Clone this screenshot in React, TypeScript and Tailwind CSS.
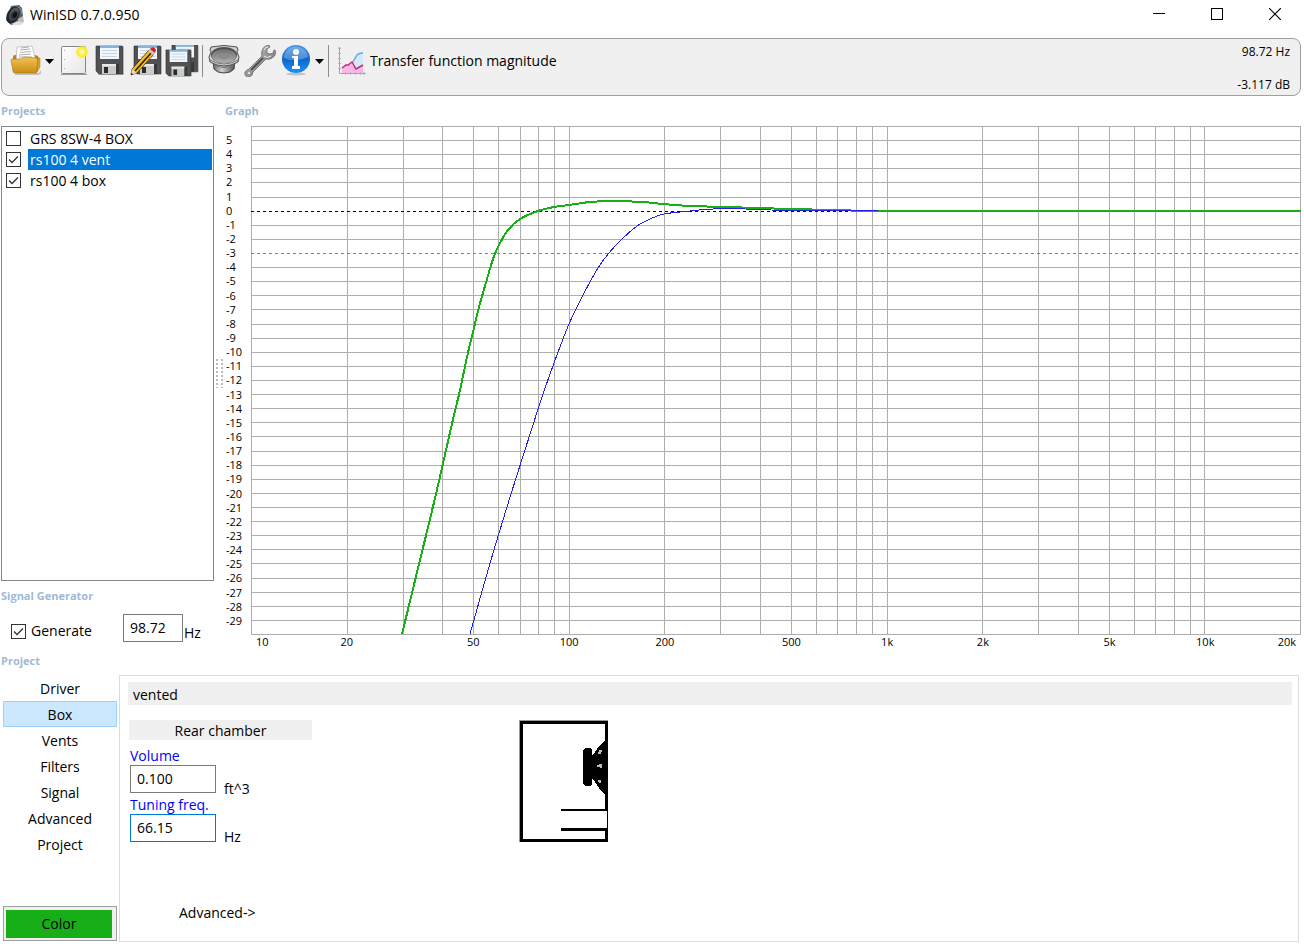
import { useState } from "react";

const FREQ_LINES = [
  20, 30, 40, 50, 60, 70, 80, 90, 100, 200, 300, 400, 500, 600, 700, 800, 900,
  1000, 2000, 3000, 4000, 5000, 6000, 7000, 8000, 9000, 10000,
];

const FREQ_LABELS = [
  { freq: 20, label: "20" },
  { freq: 50, label: "50" },
  { freq: 100, label: "100" },
  { freq: 200, label: "200" },
  { freq: 500, label: "500" },
  { freq: 1000, label: "1k" },
  { freq: 2000, label: "2k" },
  { freq: 5000, label: "5k" },
  { freq: 10000, label: "10k" },
];

const DB_LABELS = Array.from({ length: 35 }, (_, i) => 5 - i);

const PLOT_W = 1050;
const PLOT_H = 508;

const freqRatio = (freq: number) => Math.log10(freq / 10) / Math.log10(2000);
const freqX = (freq: number) => Math.round(freqRatio(freq) * (PLOT_W - 1));
const dbY = (db: number) => Math.round(((6 - db) / 36) * PLOT_H);

type Point = [number, number];

const VENTED: Point[] = [
  [151, 508], [169, 434], [185, 368], [200, 302], [209, 264], [216, 231],
  [222, 206], [228, 181], [236, 153], [242, 133], [248, 119], [257, 104],
  [269, 93], [287, 85], [303, 81], [318, 79], [339, 76], [361, 75],
  [392, 76], [412, 78], [439, 80], [477, 81], [504, 82], [542, 83],
  [580, 84], [627, 85], [700, 85], [1050, 85],
];

const CLOSED: Point[] = [
  [219, 508], [240, 434], [260, 368], [281, 302], [291, 271], [303, 237],
  [318, 198], [331, 171], [347, 142], [358, 127], [369, 115], [386, 100],
  [399, 93], [413, 88], [439, 85], [462, 83], [494, 83], [520, 84],
  [544, 84], [627, 84],
];

// Catmull-Rom through the points, written as cubic beziers
const smoothPath = (pts: Point[]) =>
  pts.slice(1).reduce((d, p2, i) => {
    const p0 = pts[Math.max(i - 1, 0)];
    const p1 = pts[i];
    const p3 = pts[Math.min(i + 2, pts.length - 1)];
    const c1 = [p1[0] + (p2[0] - p0[0]) / 6, p1[1] + (p2[1] - p0[1]) / 6];
    const c2 = [p2[0] - (p3[0] - p1[0]) / 6, p2[1] - (p3[1] - p1[1]) / 6];
    return `${d}C${c1} ${c2} ${p2}`;
  }, `M${pts[0]}`);

const NAV = ["Driver", "Box", "Vents", "Filters", "Signal", "Advanced", "Project"];

const AppIcon = () => (
  <svg width="20" height="22" viewBox="0 0 20 22" aria-hidden="true">
    <path d="M6 2l8-1 3 3 1 8-4 9-8 0-5-5z" fill="#596066" />
    <path d="M13 15l5-3 1 6-5 2z" fill="#b9bdc0" />
    <path d="M6 20l7-3 6 2-4 2H8z" fill="#dcdedf" />
    <ellipse cx="8" cy="11" rx="6" ry="9" transform="rotate(28 8 11)" fill="#22272b" />
    <ellipse cx="9" cy="10" rx="4" ry="7" transform="rotate(28 9 10)" fill="#545c63" />
    <ellipse cx="9" cy="11" rx="3" ry="5" transform="rotate(28 9 11)" fill="#30363b" />
    <ellipse cx="10" cy="11" rx="2" ry="3" transform="rotate(28 10 11)" fill="#0f1214" />
    <path d="M13 3l3 2 1 5" fill="none" stroke="#8f979d" />
  </svg>
);

const OpenIcon = () => (
  <svg width="32" height="32" viewBox="0 0 32 32" aria-hidden="true">
    <defs>
      <linearGradient id="folder" x1="0" y1="0" x2="0" y2="1">
        <stop offset="0" stopColor="#f2c157" />
        <stop offset="1" stopColor="#c98e14" />
      </linearGradient>
    </defs>
    <path d="M5 28h24l2-3v4l-3 1H5z" fill="#c2c2c2" />
    <path d="M3 12q0-2 2-2h19q4 0 5 3v10l-3 4H5l-2-5z" fill="#b98011" />
    <path d="M7 2l15-1 4 15H6z" fill="#fff" stroke="#b5b5b5" strokeWidth=".7" />
    <path d="M11 3l8-1M10 5l10-1M10 7.5l11-1M9 10l12-1M9 12h13" stroke="#9a9a9a" strokeWidth=".8" />
    <path d="M1 15q0-1 2-1h8l3-2 12 1q2 0 2 2l-1 12q0 1-2 1H5q-2 0-2-2z" fill="url(#folder)" stroke="#a9740b" strokeWidth=".6" />
    <path d="M28 14l2-1v9l-3 5z" fill="#dca736" stroke="#a9740b" strokeWidth=".5" />
  </svg>
);

const NewIcon = () => (
  <svg width="32" height="32" viewBox="0 0 32 32" aria-hidden="true">
    <defs>
      <linearGradient id="page" x1="0" y1="0" x2="1" y2="1">
        <stop offset="0" stopColor="#fff" />
        <stop offset="1" stopColor="#e6e6e6" />
      </linearGradient>
      <radialGradient id="glow">
        <stop offset="0" stopColor="#fffbd0" />
        <stop offset=".35" stopColor="#fff56a" />
        <stop offset=".65" stopColor="#fbe92d" />
        <stop offset="1" stopColor="#fff042" stopOpacity="0" />
      </radialGradient>
    </defs>
    <path d="M2 29h26v1H2z" fill="#999" />
    <rect x="2.5" y="1.5" width="24" height="27" rx="1" fill="url(#page)" stroke="#858585" />
    <path d="M5.5 5v22" stroke="#aaa" strokeDasharray="1 8" />
    <circle cx="23" cy="7" r="7" fill="url(#glow)" />
  </svg>
);

const Floppy = () => (
  <g>
    <path d="M1 1h26q1 0 1 1v27H4l-3-3z" fill="#4f5152" stroke="#333" strokeWidth=".6" />
    <path d="M5 1h19v13H5z" fill="#f3f7fc" />
    <path d="M5 1h19v2H5z" fill="#86b4dc" />
    <path d="M7 5.5h15M7 8.5h15M7 11.5h15" stroke="#c4d6e8" />
    <path d="M7 19h14v10H7z" fill="#c9cbcc" />
    <path d="M7 19h14v2H7z" fill="#e7e8e8" />
    <path d="M9 22h4v6H9z" fill="#2a2b2c" />
    <path d="M21 19h3v10h-3z" fill="#38393a" />
  </g>
);

const SaveIcon = () => (
  <svg width="32" height="32" viewBox="0 0 32 32" aria-hidden="true">
    <path d="M3 29h26v1H3z" fill="#bbb" />
    <Floppy />
  </svg>
);

const SaveAsIcon = () => (
  <svg width="32" height="32" viewBox="0 0 32 32" aria-hidden="true">
    <g transform="translate(3 0)">
      <Floppy />
    </g>
    <path d="M19 5l5 4L7 28l-6 2 1-6z" fill="#f7b920" stroke="#2b210b" strokeWidth=".7" />
    <path d="M22 7 5 26" stroke="#2b210b" strokeWidth="1.6" />
    <path d="M18 6l2-2 5 4-2 2z" fill="#c4c7c9" />
    <path d="M20 4l1-1q3-2 5 2l-1 3z" fill="#d41f26" />
    <path d="M2 24l5 4-6 2z" fill="#efd9ac" />
    <path d="M1 28l2 1-2 1z" fill="#111" />
  </svg>
);

const SaveAllIcon = () => (
  <svg width="34" height="32" viewBox="0 0 34 32" aria-hidden="true">
    <g transform="translate(6 -1) scale(.96)">
      <Floppy />
    </g>
    <g transform="translate(0 4) scale(.93)">
      <Floppy />
    </g>
  </svg>
);

const DriverIcon = () => (
  <svg width="32" height="32" viewBox="0 0 32 32" aria-hidden="true">
    <defs>
      <linearGradient id="basket" x1="0" y1="0" x2="1" y2="0">
        <stop offset="0" stopColor="#6a6a6a" />
        <stop offset=".4" stopColor="#cfcfcf" />
        <stop offset="1" stopColor="#4d4d4d" />
      </linearGradient>
      <linearGradient id="cone" x1="0" y1="0" x2="0" y2="1">
        <stop offset="0" stopColor="#6d6d6d" />
        <stop offset="1" stopColor="#b0b0b0" />
      </linearGradient>
    </defs>
    <path d="M5 16h22l-1 8q-3 4-10 4T6 24z" fill="url(#basket)" stroke="#444" />
    <path d="M6 20q10 5 20 0" fill="none" stroke="#777" />
    <path d="M3 2l4-.5q9-2 18 0l4 .5 1 3-1 2 2 5-1 5q-14 8-28 0l-1-5 2-5-1-2z" fill="#d0d0d0" stroke="#4f4f4f" />
    <ellipse cx="16" cy="10" rx="13" ry="8" fill="#4c4c4c" />
    <ellipse cx="16" cy="11" rx="12" ry="7" fill="url(#cone)" />
    <ellipse cx="16" cy="11" rx="6" ry="3" fill="#8a8a8a" />
    <path d="M2 15q14 8 28 0" fill="none" stroke="#777" />
  </svg>
);

const WrenchIcon = () => (
  <svg width="32" height="32" viewBox="0 0 32 32" aria-hidden="true">
    <defs>
      <linearGradient id="steel" x1="0" y1="0" x2="1" y2="1">
        <stop offset="0" stopColor="#c9c9c9" />
        <stop offset=".5" stopColor="#999" />
        <stop offset="1" stopColor="#6a6a6a" />
      </linearGradient>
    </defs>
    <path
      d="M18 6q1-5 7-6l1 2-3 2 0 4 3 1 3-1 1-3h1q2 5-3 8-3 2-6 1L9 27q0 4-4 5-5 0-4-5 1-2 4-3L18 11q-1-2 0-5z"
      fill="url(#steel)"
      stroke="#6b6b6b"
      strokeWidth=".8"
    />
    <path d="M19 13 7 25" stroke="#444" strokeWidth="1.6" />
    <path d="M20 5q1-3 4-3M20 11q3 3 7 0" fill="none" stroke="#eee" />
    <circle cx="5" cy="28" r="1.5" fill="#f0f0f0" stroke="#777" strokeWidth=".5" />
  </svg>
);

const InfoIcon = () => (
  <svg width="32" height="32" viewBox="0 0 32 32" aria-hidden="true">
    <defs>
      <linearGradient id="info" x1="0" y1="0" x2="0" y2="1">
        <stop offset="0" stopColor="#4697e4" />
        <stop offset=".5" stopColor="#0d66cb" />
        <stop offset="1" stopColor="#1e93f5" />
      </linearGradient>
    </defs>
    <ellipse cx="16" cy="29" rx="10" ry="1.5" fill="#c2c2c2" />
    <circle cx="16" cy="14" r="14" fill="url(#info)" />
    <path d="M4 13A12 11 0 0 1 28 12Q16 18 4 13z" fill="#fff" opacity=".25" />
    <circle cx="16" cy="7" r="3" fill="#fff" />
    <path d="M12 11h6v10h2v3h-8v-3h2v-8h-2z" fill="#fff" />
  </svg>
);

const ChartIcon = () => (
  <svg width="28" height="30" viewBox="0 0 28 30" aria-hidden="true">
    <path d="M4 25l8-7 4-2 3-6 6-3v19H4z" fill="#d5e9fa" />
    <path d="M4 22l9-5 6 6 6-4v8H4z" fill="#fbb8e6" />
    <path d="M15 16l4-7q2-2 6-2" fill="none" stroke="#62a8e6" strokeWidth="1.5" />
    <path d="M4 22l4-3 2 0 4-3 4 7 7-4" fill="none" stroke="#c2286f" strokeWidth="1.5" />
    <path d="M1.5 1v26.5H27" fill="none" stroke="#a5a5a5" />
    <path
      d="M0 3l1.5-2L3 3M0 7.5h3M0 12.5h3M0 17.5h3M0 22.5h3M7.5 26v3M12.5 26v3M17.5 26v3M22.5 26v3M25.5 26l2 1.5-2 1.5"
      fill="none"
      stroke="#b5b5b5"
    />
  </svg>
);

const Caret = () => (
  <svg width="9" height="5" viewBox="0 0 9 5" aria-hidden="true">
    <path d="M0 0h9L4.5 5z" fill="#000" />
  </svg>
);

const TickBox = ({ id, checked, onChange }: { id: string; checked: boolean; onChange: () => void }) => (
  <span className="grid shrink-0">
    <input
      id={id}
      type="checkbox"
      checked={checked}
      onChange={onChange}
      className="col-start-1 row-start-1 size-[15px] appearance-none border border-[#333] bg-white"
    />
    {checked && (
      <svg className="pointer-events-none col-start-1 row-start-1" width="15" height="15" viewBox="0 0 15 15" aria-hidden="true">
        <path d="M3 7.5l3 3 6-6" fill="none" stroke="#333" strokeWidth="1.3" />
      </svg>
    )}
  </span>
);

const TitleBar = () => (
  <header className="flex h-[38px] items-start justify-between">
    <h1 className="flex h-[29px] items-center gap-[5px] pl-[5px] text-sm">
      <AppIcon />
      WinISD 0.7.0.950
    </h1>
    <div className="flex h-7 items-center">
      <button aria-label="Minimize" className="grid w-[58px] place-items-center">
        <svg width="12" height="12" viewBox="0 0 12 12" shapeRendering="crispEdges">
          <path d="M0 5.5h12" stroke="#000" />
        </svg>
      </button>
      <button aria-label="Maximize" className="grid w-[58px] place-items-center">
        <svg width="12" height="12" viewBox="0 0 12 12" shapeRendering="crispEdges">
          <path d="M.5 .5h11v11H.5z" fill="none" stroke="#000" />
        </svg>
      </button>
      <button aria-label="Close" className="grid w-[58px] place-items-center">
        <svg width="12" height="12" viewBox="0 0 12 12">
          <path d="M0 0l12 12M12 0L0 12" stroke="#000" strokeWidth="1.2" />
        </svg>
      </button>
    </div>
  </header>
);

const Toolbar = () => (
  <div className="mr-[3px] ml-px flex h-[58px] justify-between rounded-lg border border-[#a0a0a0] bg-[#f0f0f0] pr-2.5 pl-2">
    <div className="flex h-11 items-center">
      <button aria-label="Open project"><OpenIcon /></button>
      <button aria-label="Recent projects" className="mr-[5px] ml-[3px] py-3"><Caret /></button>
      <button aria-label="New project"><NewIcon /></button>
      <button aria-label="Save" className="ml-1"><SaveIcon /></button>
      <button aria-label="Save as" className="ml-[3px]"><SaveAsIcon /></button>
      <button aria-label="Save all" className="ml-[3px]"><SaveAllIcon /></button>
      <span className="mx-[3px] h-8 w-px bg-[#8c8c8c]" />
      <button aria-label="Driver editor" className="ml-0.5"><DriverIcon /></button>
      <button aria-label="Options" className="ml-1"><WrenchIcon /></button>
      <button aria-label="About" className="ml-1"><InfoIcon /></button>
      <button aria-label="Help topics" className="ml-[3px] py-3"><Caret /></button>
      <span className="mx-1 h-8 w-px bg-[#8c8c8c]" />
      <button className="ml-[5px] flex items-center gap-1 text-sm">
        <ChartIcon />
        Transfer function magnitude
      </button>
    </div>
    <div className="flex flex-col justify-between pt-[5px] pb-0.5 text-right text-xs leading-4">
      <output>98.72 Hz</output>
      <output>-3.117 dB</output>
    </div>
  </div>
);

const SectionTitle = ({ children }: { children: string }) => (
  <h2 className="flex h-[30px] shrink-0 items-center pl-px text-[11px] font-bold text-[#9fb9d6]">{children}</h2>
);

const ProjectList = () => {
  const [projects, setProjects] = useState([
    { name: "GRS 8SW-4 BOX", shown: false },
    { name: "rs100 4 vent", shown: true },
    { name: "rs100 4 box", shown: true },
  ]);
  const [selected, setSelected] = useState("rs100 4 vent");

  const toggle = (name: string) =>
    setProjects(projects.map((p) => (p.name === name ? { ...p, shown: !p.shown } : p)));

  return (
    <ul className="ml-px min-h-[200px] grow border border-[#828790] p-px text-sm">
      {projects.map((p) => (
        <li key={p.name} className="flex h-[21px] items-center gap-[7px] pl-[3px]" onClick={() => setSelected(p.name)}>
          <TickBox id={p.name} checked={p.shown} onChange={() => toggle(p.name)} />
          <label
            htmlFor={p.name}
            className={`grow pl-0.5 leading-[21px] ${p.name === selected ? "bg-[#0078d7] text-white" : ""}`}
          >
            {p.name}
          </label>
        </li>
      ))}
    </ul>
  );
};

const SignalGenerator = () => {
  const [on, setOn] = useState(true);

  return (
    <div className="flex h-[39px] items-start pl-[11px] text-sm">
      <div className="mt-1 flex h-8 w-28 items-center gap-[5px]">
        <TickBox id="generate" checked={on} onChange={() => setOn(!on)} />
        <label htmlFor="generate">Generate</label>
      </div>
      <input
        aria-label="Frequency"
        defaultValue="98.72"
        className="mt-[3px] h-7 w-[60px] border border-[#7a7a7a] px-1.5 pb-0.5"
      />
      <span className="mt-3 ml-px">Hz</span>
    </div>
  );
};

const Graph = () => (
  <div className="grid grow grid-cols-[27px_minmax(0,1fr)] grid-rows-[minmax(0,1fr)_15px] pr-[3px] text-[11px] leading-[14px]">
    <div className="flex flex-col py-[7px]">
      {DB_LABELS.map((db) => (
        <span key={db} className="flex h-0 grow items-center pl-0.5">
          {db}
        </span>
      ))}
    </div>
    <svg
      className="h-full min-h-[509px] w-full overflow-visible"
      viewBox={`0 0 ${PLOT_W} ${PLOT_H + 1}`}
      preserveAspectRatio="none"
      fill="none"
      shapeRendering="crispEdges"
      role="img"
      aria-label="Transfer function magnitude"
    >
      <g stroke="#adadad">
        <rect x="0.5" y="0.5" width={PLOT_W - 1} height={PLOT_H} />
        {FREQ_LINES.map((freq) => (
          <line key={freq} x1={freqX(freq) + 0.5} x2={freqX(freq) + 0.5} y1="0" y2={PLOT_H} />
        ))}
        {DB_LABELS.filter((db) => db !== 0 && db !== -3).map((db) => (
          <line key={db} x1="0" x2={PLOT_W} y1={dbY(db) + 0.5} y2={dbY(db) + 0.5} />
        ))}
      </g>
      <line x1="0" x2={PLOT_W} y1={dbY(0) + 0.5} y2={dbY(0) + 0.5} stroke="#000" strokeDasharray="3 3" />
      <line x1="0" x2={PLOT_W} y1={dbY(-3) + 0.5} y2={dbY(-3) + 0.5} stroke="#808080" strokeDasharray="3 3" />
      <path d={smoothPath(VENTED)} stroke="#18ae18" strokeWidth="2" />
      <path d={smoothPath(CLOSED)} stroke="#2020e8" />
    </svg>
    <div className="relative col-start-2 flex justify-between px-[5px]">
      <span>10</span>
      {FREQ_LABELS.map(({ freq, label }) => (
        <span key={freq} className="absolute -translate-x-1/2" style={{ left: `${freqRatio(freq) * 100}%` }}>
          {label}
        </span>
      ))}
      <span>20k</span>
    </div>
  </div>
);

const BoxDrawing = () => (
  <svg width="89" height="122" viewBox="0 0 89 122" shapeRendering="crispEdges" role="img" aria-label="Vented box">
    <path d="M0 0h89v1H1v121H0z" fill="#999" />
    <path d="M1 1h88v88h-3V4H4v115h82v-9h3v12H1z" fill="#000" />
    <path d="M42 89h47v2H42zM42 108h47v3H42zM88 89h1v22h-1z" fill="#000" />
    <path d="M64 30l2-2h5l2 2v5h1l6-9 4-4 2-2h1v55h-1l-3-3-3-4-6-9h-1v5l-2 2h-5l-2-2z" fill="#000" />
    <path d="M80 30h3v2h-1v2h-3v-2h1zM80 44h3v4h-2v-1h-3v-2h2zM79 60h3v3h-2v-1h-1z" fill="#bbb" />
  </svg>
);

const BoxPanel = () => (
  <main className="flex min-w-0 grow flex-col border border-[#dcdcdc] pt-1.5 pr-1.5 pl-2 text-sm">
    <p className="h-[23px] shrink-0 bg-[#f0f0f0] pt-px pl-[5px] leading-[24px]">vented</p>
    <div className="flex gap-[207px] pt-[15px] pl-px">
      <div className="w-[183px]">
        <h3 className="h-5 bg-[#f0f0f0] text-center leading-[22px]">Rear chamber</h3>
        <div className="pt-1.5 pl-px">
          <label htmlFor="volume" className="block h-[19px] leading-[19px] text-[#0000ff]">
            Volume
          </label>
          <div className="flex h-[30px] gap-2">
            <input id="volume" defaultValue="0.100" className="h-7 w-[86px] border border-[#7a7a7a] px-1.5 pb-0.5" />
            <span className="mt-3.5">ft^3</span>
          </div>
          <label htmlFor="tuning" className="block h-[19px] leading-[19px] text-[#0000ff]">
            Tuning freq.
          </label>
          <div className="flex h-[30px] gap-2">
            <input id="tuning" defaultValue="66.15" className="h-7 w-[86px] border border-[#0078d7] px-1.5 pb-0.5" />
            <span className="mt-[13px]">Hz</span>
          </div>
        </div>
      </div>
      <BoxDrawing />
    </div>
    <button className="mt-auto mb-[18px] ml-[51px] self-start">Advanced-&gt;</button>
  </main>
);

export default function App() {
  const [tab, setTab] = useState("Box");

  return (
    <div className="flex min-h-screen flex-col bg-white font-['Open_Sans','Noto_Sans',sans-serif] text-black">
      <TitleBar />
      <Toolbar />
      <section className="flex grow">
        <div className="flex w-[214px] shrink-0 flex-col">
          <SectionTitle>Projects</SectionTitle>
          <ProjectList />
          <SectionTitle>Signal Generator</SectionTitle>
          <SignalGenerator />
        </div>
        <div className="grid w-2.5 place-items-center" aria-hidden="true">
          <svg width="8" height="30" viewBox="0 0 8 30" shapeRendering="crispEdges">
            <path d="M2 1v29M7 1v29" stroke="#bdbdbd" strokeWidth="2" strokeDasharray="2 2" />
          </svg>
        </div>
        <div className="flex min-w-0 grow flex-col">
          <SectionTitle>Graph</SectionTitle>
          <Graph />
        </div>
      </section>
      <h2 className="flex h-[25px] items-center pb-0.5 pl-px text-[11px] font-bold text-[#9fb9d6]">Project</h2>
      <section className="mb-1.5 flex min-h-[267px] gap-0.5 pr-[5px] pl-[3px]">
        <nav className="flex w-[114px] shrink-0 flex-col text-sm">
          {NAV.map((name) => (
            <button
              key={name}
              onClick={() => setTab(name)}
              className={`h-[26px] border pt-0.5 ${name === tab ? "border-[#99d1ff] bg-[#cce8ff]" : "border-transparent"}`}
            >
              {name}
            </button>
          ))}
          <button className="mt-auto mb-px h-[35px] border border-[#a0a0a0] bg-[#f0f0f0] pt-[3px] pr-1 pb-0.5 pl-0.5">
            <span className="block bg-[#18ae18] leading-7">Color</span>
          </button>
        </nav>
        <BoxPanel />
      </section>
    </div>
  );
}
